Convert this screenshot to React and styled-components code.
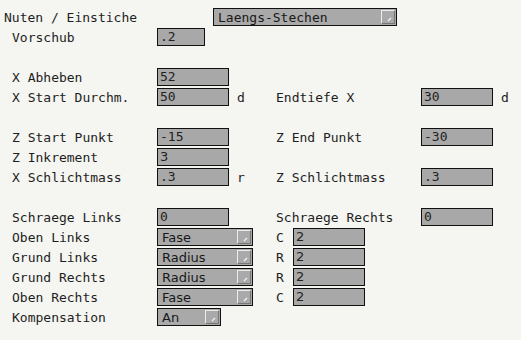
import React from 'react';
import styled, { createGlobalStyle } from 'styled-components';

const Global = createGlobalStyle`
  html, body {
    margin: 0;
    background: #f5f5f1;
  }
  body {
    font-family: "DejaVu Sans Mono", "Liberation Mono", monospace;
    font-size: 13px;
    color: #1e1e1e;
  }
`;

const Page = styled.div`
  width: 521px;
  height: 340px;
  padding-top: 7px;
  box-sizing: border-box;
`;

const Row = styled.div`
  display: grid;
  grid-template-columns: 145px 119px 145px auto;
  align-items: center;
  height: 20px;
  padding-left: 12px;
`;

const TitleRow = styled.div`
  display: flex;
  align-items: center;
  height: 20px;
  padding-left: 4px;
`;

const Title = styled.span`
  width: 209px;
`;

const Label = styled.span`
  white-space: pre;
`;

const Cell = styled.div`
  display: flex;
  align-items: center;
`;

const Unit = styled.span`
  margin-left: 8px;
`;

const ShortLabel = styled.span`
  width: 17px;
`;

const Field = styled.div`
  box-sizing: border-box;
  width: ${p => p.w || 72}px;
  height: 18px;
  background: #a8a8a8;
  border: 1px solid #111;
  padding-left: 2px;
  line-height: 16px;
  font-family: ${p => p.sans ? '"DejaVu Sans", sans-serif' : '"DejaVu Sans Mono", monospace'};
  font-size: 13px;
  color: #222;
  overflow: hidden;
`;

const Select = styled.div`
  box-sizing: border-box;
  display: flex;
  align-items: center;
  justify-content: space-between;
  width: ${p => p.w}px;
  height: 18px;
  background: #a9a9a9;
  border: 1px solid #111;
  padding-left: 4px;
  padding-right: 1px;
  font-family: ${p => p.sans ? '"DejaVu Sans", sans-serif' : '"DejaVu Sans Mono", monospace'};
  font-size: 13px;
  color: #181818;
`;

const Arrow = styled.div`
  box-sizing: border-box;
  width: 14px;
  height: 14px;
  border-top: 1px solid #ececec;
  border-left: 1px solid #ececec;
  border-right: 1px solid #777;
  border-bottom: 1px solid #777;
  background: #a9a9a9;
  display: flex;
  align-items: flex-end;
  justify-content: flex-end;
`;

function Dropdown({ value, w, sans }) {
  return (
    <Select w={w} sans={sans}>
      <span>{value}</span>
      <Arrow>
        <svg width="8" height="8" viewBox="0 0 8 8">
          <path d="M2 6 L5 3" stroke="#f4f4f4" strokeWidth="1.3" />
        </svg>
      </Arrow>
    </Select>
  );
}

const Spacer = styled.div`
  height: 20px;
`;

export default function App() {
  return (
    <Page>
      <Global />
      <TitleRow>
        <Title>Nuten / Einstiche</Title>
        <Dropdown value="Laengs-Stechen" w={184} />
      </TitleRow>
      <Row>
        <Label>Vorschub</Label>
        <Cell><Field w={48}>.2</Field></Cell>
      </Row>
      <Spacer />
      <Row>
        <Label>X Abheben</Label>
        <Cell><Field>52</Field></Cell>
      </Row>
      <Row>
        <Label>X Start Durchm.</Label>
        <Cell><Field>50</Field><Unit>d</Unit></Cell>
        <Label>Endtiefe X</Label>
        <Cell><Field>30</Field><Unit>d</Unit></Cell>
      </Row>
      <Spacer />
      <Row>
        <Label>Z Start Punkt</Label>
        <Cell><Field>-15</Field></Cell>
        <Label>Z End Punkt</Label>
        <Cell><Field>-30</Field></Cell>
      </Row>
      <Row>
        <Label>Z Inkrement</Label>
        <Cell><Field sans>3</Field></Cell>
      </Row>
      <Row>
        <Label>X Schlichtmass</Label>
        <Cell><Field>.3</Field><Unit>r</Unit></Cell>
        <Label>Z Schlichtmass</Label>
        <Cell><Field>.3</Field></Cell>
      </Row>
      <Spacer />
      <Row>
        <Label>Schraege Links</Label>
        <Cell><Field>0</Field></Cell>
        <Label>Schraege Rechts</Label>
        <Cell><Field>0</Field></Cell>
      </Row>
      {[
        ['Oben Links', 'Fase', 'C'],
        ['Grund Links', 'Radius', 'R'],
        ['Grund Rechts', 'Radius', 'R'],
        ['Oben Rechts', 'Fase', 'C'],
      ].map(([label, kind, short]) => (
        <Row key={label}>
          <Label>{label}</Label>
          <Cell><Dropdown value={kind} w={96} sans /></Cell>
          <Cell>
            <ShortLabel>{short}</ShortLabel>
            <Field sans>2</Field>
          </Cell>
        </Row>
      ))}
      <Row>
        <Label>Kompensation</Label>
        <Cell><Dropdown value="An" w={64} sans /></Cell>
      </Row>
    </Page>
  );
}
